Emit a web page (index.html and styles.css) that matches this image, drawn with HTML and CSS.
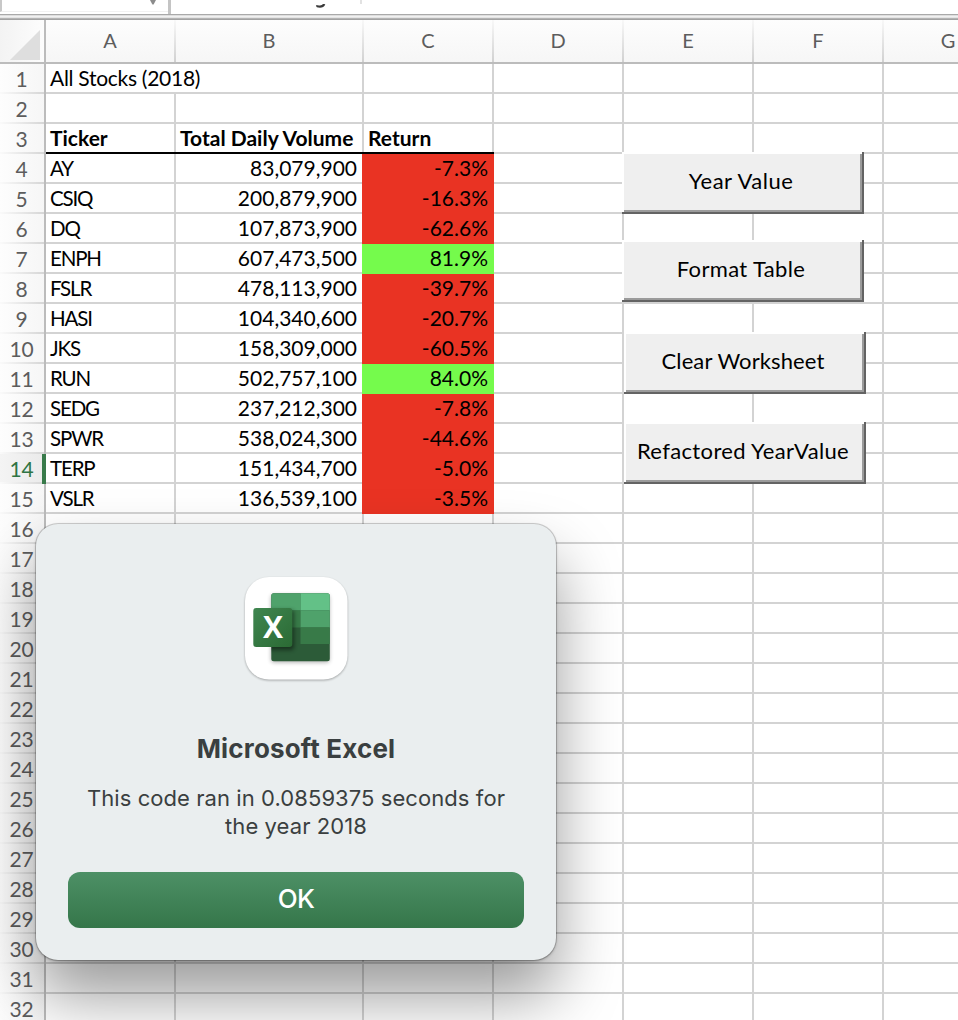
FILE: index.html
```html
<!DOCTYPE html>
<html lang="en">
<head>
<meta charset="utf-8">
<title>All Stocks (2018)</title>
<link rel="stylesheet" href="styles.css">
</head>
<body>
<div class="window">
  <div class="formula-bar">
    <div class="name-box"><svg width="8" height="5" viewBox="0 0 8 5"><path d="M1 0h6L4.600 4.600h-1.200z" fill="#8c8c8c"/></svg></div>
    <div class="fx"><svg width="12" height="4" viewBox="0 0 12 4"><path d="M9.300 0C8.400 1.800 7 2.600 5 2.600 3.400 2.600 2 2.400 2 1.200" fill="none" stroke="#3a3a3a" stroke-width="2.200"/></svg></div>
    <div class="formula-input"></div>
  </div>
  <div class="divider"></div>
  <table class="sheet">
    <colgroup><col class="c-head"><col class="c-std"><col class="c-wide"><col class="c-std"><col class="c-std"><col class="c-std"><col class="c-std"><col class="c-std"></colgroup>
    <thead>
      <tr><th class="corner"><svg width="30" height="30" viewBox="0 0 30 30"><path d="M30 0v30H0z" fill="#dedede"/></svg></th><th>A</th><th>B</th><th>C</th><th>D</th><th>E</th><th>F</th><th>G</th></tr>
    </thead>
    <tbody>
      <tr><th>1</th><td class="sheet-title" colspan="2">All Stocks (2018)</td><td></td><td></td><td></td><td></td><td></td></tr>
      <tr><th>2</th><td></td><td></td><td></td><td></td><td></td><td></td><td></td></tr>
      <tr class="titles"><th>3</th><td>Ticker</td><td>Total Daily Volume</td><td>Return</td><td></td><td></td><td></td><td></td></tr>
      <tr><th>4</th><td class="sym">AY</td><td class="num">83,079,900</td><td class="pct down">-7.3%</td><td></td><td></td><td></td><td></td></tr>
      <tr><th>5</th><td class="sym">CSIQ</td><td class="num">200,879,900</td><td class="pct down">-16.3%</td><td></td><td></td><td></td><td></td></tr>
      <tr><th>6</th><td class="sym">DQ</td><td class="num">107,873,900</td><td class="pct down">-62.6%</td><td></td><td></td><td></td><td></td></tr>
      <tr><th>7</th><td class="sym">ENPH</td><td class="num">607,473,500</td><td class="pct up">81.9%</td><td></td><td></td><td></td><td></td></tr>
      <tr><th>8</th><td class="sym">FSLR</td><td class="num">478,113,900</td><td class="pct down">-39.7%</td><td></td><td></td><td></td><td></td></tr>
      <tr><th>9</th><td class="sym">HASI</td><td class="num">104,340,600</td><td class="pct down">-20.7%</td><td></td><td></td><td></td><td></td></tr>
      <tr><th>10</th><td class="sym">JKS</td><td class="num">158,309,000</td><td class="pct down">-60.5%</td><td></td><td></td><td></td><td></td></tr>
      <tr><th>11</th><td class="sym">RUN</td><td class="num">502,757,100</td><td class="pct up">84.0%</td><td></td><td></td><td></td><td></td></tr>
      <tr><th>12</th><td class="sym">SEDG</td><td class="num">237,212,300</td><td class="pct down">-7.8%</td><td></td><td></td><td></td><td></td></tr>
      <tr><th>13</th><td class="sym">SPWR</td><td class="num">538,024,300</td><td class="pct down">-44.6%</td><td></td><td></td><td></td><td></td></tr>
      <tr class="active"><th>14</th><td class="sym">TERP</td><td class="num">151,434,700</td><td class="pct down">-5.0%</td><td></td><td></td><td></td><td></td></tr>
      <tr><th>15</th><td class="sym">VSLR</td><td class="num">136,539,100</td><td class="pct down">-3.5%</td><td></td><td></td><td></td><td></td></tr>
      <tr><th>16</th><td></td><td></td><td></td><td></td><td></td><td></td><td></td></tr>
      <tr><th>17</th><td></td><td></td><td></td><td></td><td></td><td></td><td></td></tr>
      <tr><th>18</th><td></td><td></td><td></td><td></td><td></td><td></td><td></td></tr>
      <tr><th>19</th><td></td><td></td><td></td><td></td><td></td><td></td><td></td></tr>
      <tr><th>20</th><td></td><td></td><td></td><td></td><td></td><td></td><td></td></tr>
      <tr><th>21</th><td></td><td></td><td></td><td></td><td></td><td></td><td></td></tr>
      <tr><th>22</th><td></td><td></td><td></td><td></td><td></td><td></td><td></td></tr>
      <tr><th>23</th><td></td><td></td><td></td><td></td><td></td><td></td><td></td></tr>
      <tr><th>24</th><td></td><td></td><td></td><td></td><td></td><td></td><td></td></tr>
      <tr><th>25</th><td></td><td></td><td></td><td></td><td></td><td></td><td></td></tr>
      <tr><th>26</th><td></td><td></td><td></td><td></td><td></td><td></td><td></td></tr>
      <tr><th>27</th><td></td><td></td><td></td><td></td><td></td><td></td><td></td></tr>
      <tr><th>28</th><td></td><td></td><td></td><td></td><td></td><td></td><td></td></tr>
      <tr><th>29</th><td></td><td></td><td></td><td></td><td></td><td></td><td></td></tr>
      <tr><th>30</th><td></td><td></td><td></td><td></td><td></td><td></td><td></td></tr>
      <tr><th>31</th><td></td><td></td><td></td><td></td><td></td><td></td><td></td></tr>
      <tr><th>32</th><td></td><td></td><td></td><td></td><td></td><td></td><td></td></tr>
    </tbody>
  </table>

  <button class="macro m-year">Year Value</button>
  <button class="macro m-format">Format Table</button>
  <button class="macro m-clear">Clear Worksheet</button>
  <button class="macro m-refactored">Refactored YearValue</button>

  <div class="dialog">
    <div class="app-icon">
      <svg width="104" height="104" viewBox="0 0 104 104">
        <defs>
          <linearGradient id="badge" x1="0" y1="0" x2="1" y2="1"><stop offset="0" stop-color="#3f8650"/><stop offset="1" stop-color="#2b6a34"/></linearGradient>
          <clipPath id="book"><rect x="27.300" y="17.300" width="58.500" height="68" rx="2.500"/></clipPath>
          <filter id="soft" x="-30%" y="-30%" width="160%" height="160%"><feGaussianBlur stdDeviation="2"/></filter>
          <filter id="edge" x="-10%" y="-10%" width="120%" height="120%"><feGaussianBlur stdDeviation="1"/></filter>
        </defs>
        <rect x="1" y="2" width="102.500" height="102.500" rx="24" fill="#000" opacity=".3" filter="url(#edge)"/>
        <rect x="1" y="1" width="102.500" height="102.500" rx="24" fill="#fff"/>
        <rect x="27" y="19" width="58.500" height="67.500" rx="3" fill="#000" opacity=".3" filter="url(#soft)"/>
        <g clip-path="url(#book)">
          <rect x="27" y="17" width="59" height="69" fill="#2c5b38"/>
          <rect x="27" y="17" width="29.500" height="17.500" fill="#4fa26b"/>
          <rect x="56.500" y="17" width="30" height="17.500" fill="#63c187"/>
          <rect x="27" y="34.500" width="29.500" height="17" fill="#387a48"/>
          <rect x="56.500" y="34.500" width="30" height="17" fill="#4fa26b"/>
          <rect x="56.500" y="51.500" width="30" height="16.500" fill="#387a48"/>
          <rect x="10" y="34" width="40" height="40" rx="3" fill="#000" opacity=".45" filter="url(#soft)"/>
        </g>
        <rect x="9.300" y="32" width="39" height="39" rx="3" fill="url(#badge)"/>
        <text class="x-mark" x="28.900" y="61.800" text-anchor="middle">X</text>
      </svg>
    </div>
    <div class="dialog-title">Microsoft Excel</div>
    <div class="dialog-text">This code ran in 0.0859375 seconds for<br>the year 2018</div>
    <button class="ok">OK</button>
  </div>
</div>
</body>
</html>
```
FILE: styles.css
```css
* { box-sizing: border-box; }
body { margin: 0; background: #fff; }
button { font: inherit; margin: 0; padding: 0; }

.window {
  position: relative;
  width: 958px;
  height: 1020px;
  overflow: hidden;
  font: 21px/28px Lato, "Open Sans", sans-serif;
  color: #000;
}

/* formula bar */
.formula-bar { display: flex; height: 14px; background: #fff; }
.name-box {
  display: flex;
  width: 168px;
  height: 12px;
  padding-left: 147px;
  border-left: 2px solid #c8c8c8;
  border-bottom: 1px solid #f2f2f2;
}
.fx {
  width: 192px;
  height: 14px;
  padding-left: 144px;
  border-left: 3px solid #c4c4c4;
  line-height: 0;
}
.formula-input { flex: 1; height: 4px; border-left: 2px solid #e2e2e2; }
.divider {
  height: 6px;
  background: linear-gradient(#a9a9a9 0 1px, #dedede 1px 2px, #f1f1f1 2px 3px, #e4e4e4 3px 4px, #b4b4b4 4px 5px, #a2a2a2 5px);
}

/* worksheet */
.sheet {
  width: 1014px;
  table-layout: fixed;
  border-collapse: separate;
  border-spacing: 0;
}
.c-head { width: 46px; }
.c-std { width: 130px; }
.c-wide { width: 188px; }
.sheet th { padding: 0; font-weight: 400; color: #5d5d5d; }
.sheet thead th {
  height: 44px;
  padding: 0 2px 4px 0;
  font-size: 20px;
  line-height: 28px;
  background:
    linear-gradient(#bcbcbc, #bcbcbc) bottom / 100% 2px no-repeat,
    linear-gradient(#f8f8f8, #cfcfcf) right / 2px 100% no-repeat,
    linear-gradient(#fdfdfd, #f6f6f6);
}
.sheet thead .corner {
  padding: 6px 0 0 10px;
  text-align: left;
  line-height: 0;
  background:
    linear-gradient(#bcbcbc, #bcbcbc) right / 2px 100% no-repeat,
    linear-gradient(#bcbcbc, #bcbcbc) bottom / 100% 2px no-repeat,
    linear-gradient(90deg, #f3f3f3, #fdfdfd);
}
.sheet tbody th {
  height: 30px;
  padding: 0 3px 0 0;
  line-height: 24px;
  letter-spacing: -0.1px;
  background:
    linear-gradient(#bcbcbc, #bcbcbc) right / 2px 100% no-repeat,
    linear-gradient(90deg, #fafafa, #d4d4d4) bottom / 100% 2px no-repeat,
    linear-gradient(90deg, #fdfdfd, #f6f6f6);
}
.sheet .active th {
  color: #2f7444;
  background:
    linear-gradient(#387a4a, #387a4a) right / 4px 100% no-repeat,
    linear-gradient(90deg, #fafafa, #d4d4d4) bottom / 100% 2px no-repeat,
    linear-gradient(90deg, #f4f4f4, #eaeaea);
}
.sheet td {
  height: 30px;
  padding: 1px 0 1px 4px;
  border-right: 2px solid #d3d3d3;
  border-bottom: 2px solid #d3d3d3;
  line-height: 26px;
  white-space: nowrap;
}
.sheet-title { letter-spacing: -0.28px; }
.sheet .sym { font-size: 20.5px; letter-spacing: -1.15px; }
.sheet .num { padding-right: 5px; text-align: right; }
.sheet .pct { padding-right: 4px; text-align: right; }
.sheet .down { background: #e93323; border-color: #e93323; box-shadow: -2px 0 0 #e93323; }
.sheet .up { background: #75fb4c; border-color: #75fb4c; box-shadow: -2px 0 0 #75fb4c; }
.titles td { font-weight: 700; }
.titles td:nth-child(-n+4) {
  padding-bottom: 3px;
  border: 0;
  background:
    linear-gradient(#000, #000) bottom / 100% 2px no-repeat,
    linear-gradient(#d3d3d3, #d3d3d3) right / 2px 100% no-repeat;
}

/* macro buttons floating on the sheet */
.macro {
  position: absolute;
  width: 242px;
  height: 62px;
  padding: 0 4px 4px 0;
  border: 0;
  background: #efefef;
  box-shadow: inset -2px -2px 0 #636363, inset 2px 2px 0 #fff, inset -4px -4px 0 #9b9b9b;
  font-size: 22px;
  color: #000;
}
.m-year { left: 622px; top: 152px; letter-spacing: 0.5px; }
.m-format { left: 622px; top: 240px; letter-spacing: 0.35px; }
.m-clear { left: 624px; top: 332px; letter-spacing: 0.1px; }
.m-refactored { left: 624px; top: 422px; letter-spacing: 0.36px; }

/* alert */
.dialog {
  position: absolute;
  left: 36px;
  top: 524px;
  width: 520px;
  height: 436px;
  padding: 52px 32px 32px;
  display: flex;
  flex-direction: column;
  align-items: center;
  border-radius: 22px;
  background: #eaeeef;
  box-shadow: 0 0 0 1px rgba(0,0,0,.16), 0 1px 3px rgba(0,0,0,.3), 0 36px 64px rgba(0,0,0,.4);
  font-family: Inter, sans-serif;
  color: #3a3f40;
}
.app-icon { width: 104px; height: 104px; }
.app-icon svg { display: block; overflow: visible; }
.x-mark { font: 700 30px "Open Sans", sans-serif; fill: #fff; }
.dialog-title { margin-top: 53px; font-size: 26px; font-weight: 700; line-height: 32px; letter-spacing: 0.16px; white-space: nowrap; }
.dialog-text { margin-top: 19px; font-size: 22px; line-height: 28px; letter-spacing: 0.07px; text-align: center; white-space: nowrap; }
.ok {
  width: 456px;
  height: 56px;
  margin-top: auto;
  padding-bottom: 2px;
  border: 0;
  border-radius: 12px;
  background: linear-gradient(#4d9066, #35764a);
  color: #fff;
  font-size: 26px;
  font-weight: 500;
  letter-spacing: -0.6px;
}
```
